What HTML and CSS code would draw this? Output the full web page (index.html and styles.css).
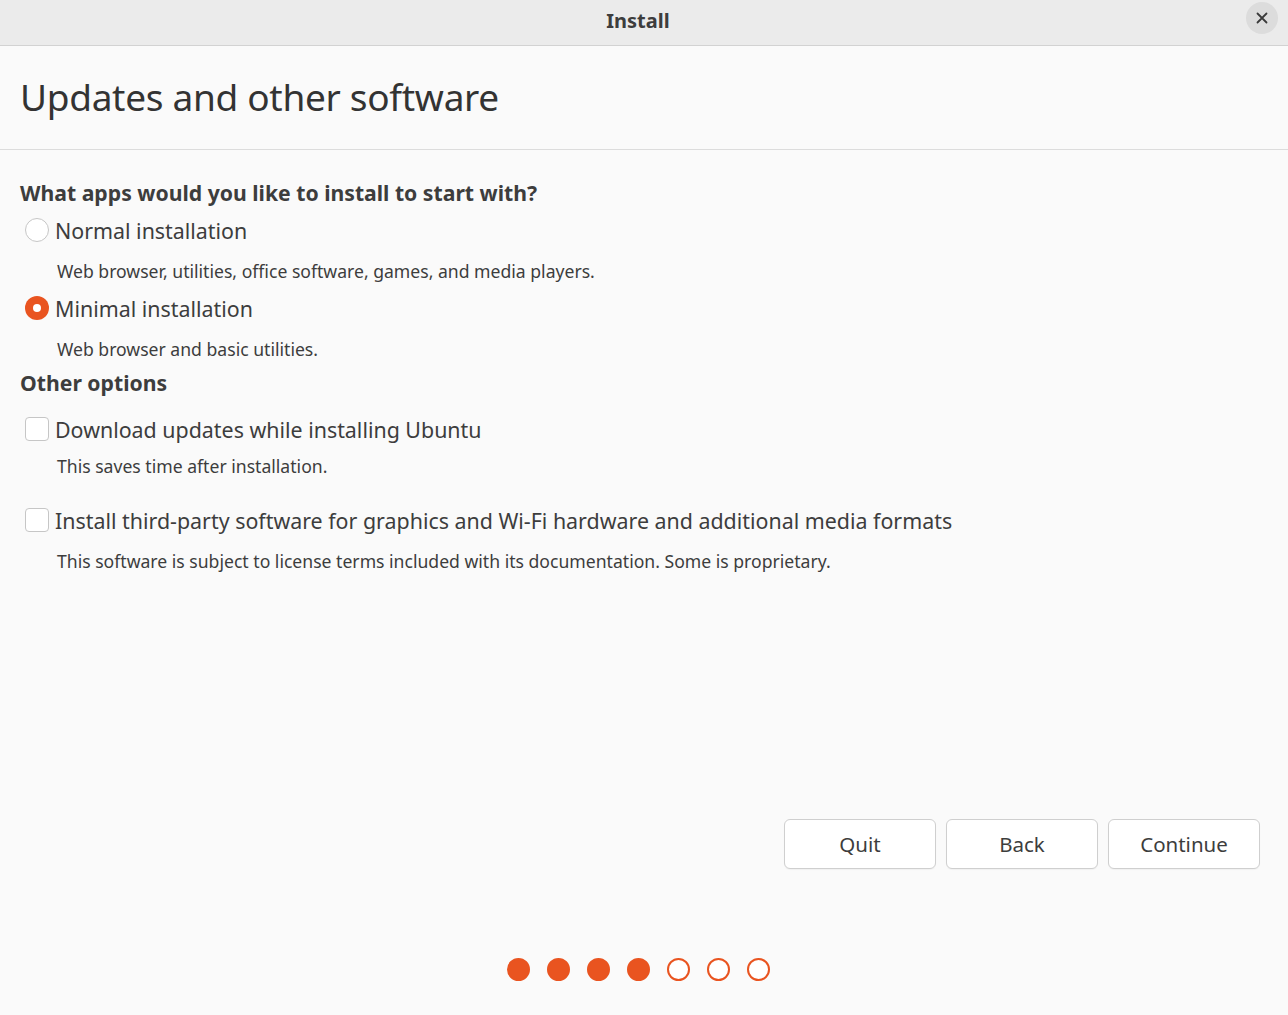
FILE: index.html
```html
<!DOCTYPE html>
<html>
<head>
<meta charset="utf-8">
<link rel="stylesheet" href="styles.css">
</head>
<body>
<div class="window">
  <header class="titlebar">
    <div class="tb-side"></div>
    <div class="tb-title">Install</div>
    <div class="tb-side tb-right">
      <button class="close-btn" aria-label="Close">
        <svg width="14" height="14" viewBox="0 0 14 14"><path d="M2.5 2.5 L11.5 11.5 M11.5 2.5 L2.5 11.5" stroke="#3a3a3a" stroke-width="1.8" stroke-linecap="round"/></svg>
      </button>
    </div>
  </header>

  <div class="page-header">
    <h1 class="page-title">Updates and other software</h1>
  </div>

  <main class="content">
    <h2 class="section-title">What apps would you like to install to start with?</h2>

    <div class="option">
      <div class="option-row">
        <span class="radio"></span>
        <span class="option-label">Normal installation</span>
      </div>
      <div class="option-desc">Web browser, utilities, office software, games, and media players.</div>
    </div>

    <div class="option">
      <div class="option-row">
        <span class="radio checked"></span>
        <span class="option-label">Minimal installation</span>
      </div>
      <div class="option-desc">Web browser and basic utilities.</div>
    </div>

    <h2 class="section-title other">Other options</h2>

    <div class="check-option">
      <div class="option-row">
        <span class="checkbox"></span>
        <span class="option-label">Download updates while installing Ubuntu</span>
      </div>
      <div class="option-desc">This saves time after installation.</div>
    </div>

    <div class="check-option second">
      <div class="option-row">
        <span class="checkbox"></span>
        <span class="option-label">Install third-party software for graphics and Wi-Fi hardware and additional media formats</span>
      </div>
      <div class="option-desc">This software is subject to license terms included with its documentation. Some is proprietary.</div>
    </div>
  </main>

  <div class="actions">
    <button class="btn">Quit</button>
    <button class="btn">Back</button>
    <button class="btn">Continue</button>
  </div>

  <div class="steps">
    <span class="dot done"></span>
    <span class="dot done"></span>
    <span class="dot done"></span>
    <span class="dot done"></span>
    <span class="dot"></span>
    <span class="dot"></span>
    <span class="dot"></span>
  </div>
</div>
</body>
</html>
```

FILE: styles.css
```css
* { box-sizing: border-box; }

html, body {
  margin: 0;
  padding: 0;
}

body {
  background: #fafafa;
  font-family: "Noto Sans", "Open Sans", sans-serif;
  color: #3d3d3d;
}

.window {
  width: 1288px;
  height: 1015px;
  display: flex;
  flex-direction: column;
  background: #fafafa;
}

.titlebar {
  height: 46px;
  flex: none;
  background: #ebebeb;
  border-bottom: 1px solid #d2d2d2;
  display: grid;
  grid-template-columns: 1fr auto 1fr;
  align-items: center;
}

.tb-title {
  font-size: 20px;
  font-weight: 700;
  color: #3d3d3d;
  padding-bottom: 4px;
  margin-right: 12px;
}

.tb-right {
  display: flex;
  justify-content: flex-end;
  padding-right: 10px;
  padding-bottom: 9px;
}

.close-btn {
  width: 32px;
  height: 32px;
  border-radius: 50%;
  border: none;
  background: #dcdcdc;
  display: flex;
  align-items: center;
  justify-content: center;
  padding: 0;
}

.page-header {
  height: 104px;
  flex: none;
  border-bottom: 1px solid #dcdcdc;
  display: flex;
  align-items: center;
  padding-left: 20px;
  padding-bottom: 2px;
}

.page-title {
  margin: 0;
  font-size: 37px;
  font-weight: 400;
  color: #333;
  letter-spacing: -0.3px;
}

.content {
  padding: 27px 20px 0 20px;
}

.section-title {
  margin: 0;
  font-size: 21.2px;
  font-weight: 700;
  color: #3d3d3d;
  line-height: 32px;
}

.section-title.other {
  margin-top: 6px;
}

.option {
  margin-top: 6px;
}

.option + .option {
  margin-top: 10px;
}

.option-row {
  display: flex;
  align-items: center;
  gap: 6px;
  height: 30px;
  padding-left: 5px;
}

.option-label {
  font-size: 21.4px;
  color: #3d3d3d;
}

.option-desc {
  font-size: 17.6px;
  color: #3d3d3d;
  padding-left: 37px;
  margin-top: 14px;
  line-height: 24px;
}

.radio {
  width: 24px;
  height: 24px;
  border-radius: 50%;
  border: 1px solid #c6c6c6;
  background: #fff;
  flex: none;
}

.radio.checked {
  border: none;
  background: #e95420;
  display: flex;
  align-items: center;
  justify-content: center;
}

.radio.checked::after {
  content: "";
  width: 8px;
  height: 8px;
  border-radius: 50%;
  background: #fff;
}

.check-option {
  margin-top: 15px;
}

.check-option .option-desc {
  margin-top: 10px;
}

.check-option.second {
  margin-top: 27px;
}

.check-option.second .option-desc {
  margin-top: 14px;
}

.checkbox {
  width: 24px;
  height: 24px;
  border-radius: 4px;
  border: 1px solid #c6c6c6;
  background: #fff;
  flex: none;
}

.actions {
  margin-top: auto;
  display: flex;
  justify-content: flex-end;
  gap: 10px;
  padding-right: 28px;
}

.btn {
  width: 152px;
  height: 50px;
  border: 1px solid #cfcfcf;
  border-radius: 6px;
  background: #fff;
  font-family: "Noto Sans", "Open Sans", sans-serif;
  font-size: 20.5px;
  color: #3d3d3d;
  padding: 0;
  box-shadow: 0 1px 1px rgba(0,0,0,0.04);
}

.steps {
  flex: none;
  display: flex;
  justify-content: center;
  align-items: center;
  gap: 17px;
  padding: 89px 12px 34px 0;
}

.dot {
  width: 23px;
  height: 23px;
  border-radius: 50%;
  border: 2px solid #e95420;
  background: #fff;
}

.dot.done {
  background: #e95420;
}
```
